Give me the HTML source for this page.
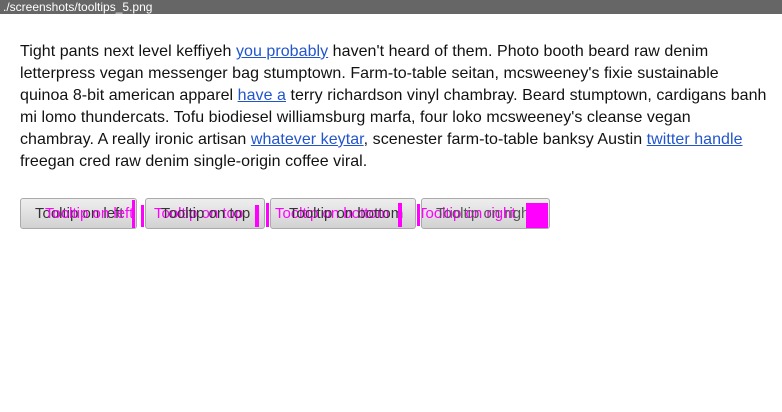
<!DOCTYPE html>
<html><head><style>
body{margin:0;width:782px;height:412px;background:#fff;font-family:"Liberation Sans",sans-serif;position:relative;overflow:hidden}
.hdr{height:14px;background:#666;color:#fff;font-size:12px;line-height:14px;padding-left:3px}
p{position:absolute;left:20px;top:41px;margin:0;font-size:16px;line-height:22px;color:#111;white-space:nowrap;letter-spacing:0.05px}
a{color:#2255cc;text-decoration:underline}
.b{position:absolute;top:198px;height:31px;border:1px solid #aaa;border-radius:3px;background:linear-gradient(#eee,#d2d2d2);box-sizing:border-box;font-size:15px;line-height:29px;white-space:nowrap;overflow:hidden}
.t{position:absolute;top:0}
.k{color:#333}.m{color:#f0f}
.bar{position:absolute;background:#f0f}
</style></head><body>
<div class="hdr">./screenshots/tooltips_5.png</div>
<p>Tight pants next level keffiyeh <a>you probably</a> haven't heard of them. Photo booth beard raw denim<br>letterpress vegan messenger bag stumptown. Farm-to-table seitan, mcsweeney's fixie sustainable<br>quinoa 8-bit american apparel <a>have a</a> terry richardson vinyl chambray. Beard stumptown, cardigans banh<br>mi lomo thundercats. Tofu biodiesel williamsburg marfa, four loko mcsweeney's cleanse vegan<br>chambray. A really ironic artisan <a>whatever keytar</a>, scenester farm-to-table banksy Austin <a>twitter handle</a><br>freegan cred raw denim single-origin coffee viral.</p>
<div class="b" style="left:20px;width:117px"><span class="t k" style="left:14px">Tooltip on left</span><span class="t m" style="left:24px">Tooltip on left</span></div>
<div class="bar" style="left:132px;top:200px;width:3px;height:28px"></div>
<div class="b" style="left:145px;width:120px"><span class="t m" style="left:8px">Tooltip on top</span><span class="t k" style="left:15px">Tooltip on top</span></div>
<div class="bar" style="left:141px;top:205px;width:3px;height:22px"></div>
<div class="bar" style="left:255px;top:205px;width:4px;height:22px"></div>
<div class="b" style="left:270px;width:146px"><span class="t m" style="left:4px">Tooltip on bottom</span><span class="t k" style="left:18px">Tooltip on bottom</span></div>
<div class="bar" style="left:266px;top:203px;width:3px;height:24px"></div>
<div class="bar" style="left:398px;top:203px;width:4px;height:24px"></div>
<div class="b" style="left:421px;width:129px"><span class="t m" style="left:-4px">Tooltip on right</span><span class="t k" style="left:14px;color:#555">Tooltip on right</span></div>
<div class="bar" style="left:417px;top:204px;width:3px;height:22px"></div>
<div class="bar" style="left:526px;top:203px;width:22px;height:25px"></div>
</body></html>
